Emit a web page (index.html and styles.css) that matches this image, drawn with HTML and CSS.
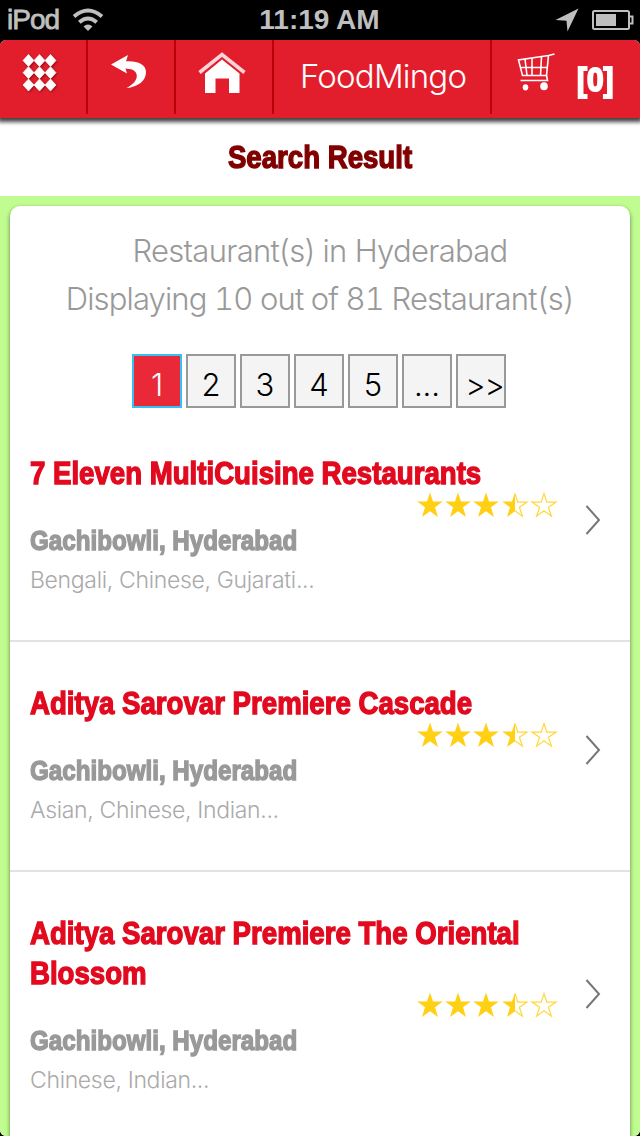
FILE: index.html
```html
<!DOCTYPE html>
<html lang="en">
<head>
    <meta charset="UTF-8">
    <meta name="viewport" content="width=device-width, initial-scale=1.0">
    <title>FoodMingo</title>
    <link rel="stylesheet" href="styles.css">
</head>
<body>
    <!-- shapes shared by all rating rows -->
    <svg class="defs" width="0" height="0">
        <symbol id="star" viewBox="0 0 28 26">
            <path d="M14 .5L17 9.5H26.8L19 15.3L22 25L14 19.2L6 25L9 15.3L1.2 9.5H11Z"/>
        </symbol>
        <symbol id="halfStar" viewBox="0 0 28 26">
            <path d="M14 .5V19.2L6 25L9 15.3L1.2 9.5H11Z"/>
            <path class="outline" d="M14 1.5L16.8 10.1H26L18.4 15.3L21.4 24.2L14 18.7"/>
        </symbol>
        <symbol id="emptyStar" viewBox="0 0 28 26">
            <path class="outline" d="M14 1.5L16.8 10.1H26L18.4 15.3L21.4 24.2L14 18.7L6.6 24.2L9.6 15.3L2 10.1H11.2Z"/>
        </symbol>
        <symbol id="rating" viewBox="0 0 142 26">
            <use href="#star" x="0" width="28" height="26"/>
            <use href="#star" x="28" width="28" height="26"/>
            <use href="#star" x="56" width="28" height="26"/>
            <use href="#halfStar" x="85" width="28" height="26"/>
            <use href="#emptyStar" x="114" width="28" height="26"/>
        </symbol>
    </svg>

    <div class="status-bar">
        <div class="carrier">
            <span>iPod</span>
            <svg width="32" height="24" viewBox="0 0 32 24">
                <g fill="none" stroke="#bfbfbf" stroke-width="4">
                    <path d="M2 8.5Q16 -3.5 30 8.5"/>
                    <path d="M7.3 14.2Q16 6.8 24.7 14.2"/>
                </g>
                <path fill="#bfbfbf" d="M11.5 18.5Q16 14.5 20.5 18.5L16 23Z"/>
            </svg>
        </div>
        <div class="time">11:19 AM</div>
        <div class="indicators">
            <svg width="24" height="24" viewBox="0 0 24 24">
                <path fill="#bfbfbf" d="M23.5 0.5L0.5 12L11.5 12.7L12.5 23.5Z"/>
            </svg>
            <svg width="42" height="20" viewBox="0 0 42 20">
                <rect x="1" y="1" width="36" height="18" rx="1.5" fill="none" stroke="#bfbfbf" stroke-width="2"/>
                <rect x="4" y="4" width="20" height="12" fill="#bfbfbf"/>
                <path d="M37 6.5H40.5V13.5H37" fill="none" stroke="#bfbfbf" stroke-width="2"/>
            </svg>
        </div>
    </div>

    <div class="page">
        <div class="header">
            <div class="nav menu">
                <svg class="shadow" width="36" height="38" viewBox="0 0 36 38">
                    <g fill="#fff" stroke="#fff" stroke-width="0.7">
                        <path d="M6.5 .5L12 6.5L6.5 12.5L1 6.5ZM17.5 .5L23 6.5L17.5 12.5L12 6.5ZM28.5 .5L34 6.5L28.5 12.5L23 6.5Z"/>
                        <path d="M6.5 12.7L12 18.7L6.5 24.7L1 18.7ZM17.5 12.7L23 18.7L17.5 24.7L12 18.7ZM28.5 12.7L34 18.7L28.5 24.7L23 18.7Z"/>
                        <path d="M6.5 25L12 31L6.5 37L1 31ZM17.5 25L23 31L17.5 37L12 31ZM28.5 25L34 31L28.5 37L23 31Z"/>
                    </g>
                </svg>
            </div>
            <div class="nav back">
                <svg width="36" height="34" viewBox="0 0 36 34">
                    <path fill="#fff" d="M0 9.5L17 0L15 6.3C26 5.5 35 9 35 17C35 26 27 32 15.5 33C23 29 27 24 25.5 19C24.2 15 20 13.7 14.5 13.5L16 18.5Z"/>
                </svg>
            </div>
            <div class="nav home">
                <svg width="48" height="42" viewBox="0 0 48 42">
                    <path fill="none" stroke="#fbd5d7" stroke-width="3.6" d="M1.5 20.5L24 2.5L46.5 20.5"/>
                    <path fill="#fff" d="M24 7.5L41.5 21.5V41H31V26.5H17.5V41H7V21.5Z"/>
                </svg>
            </div>
            <div class="nav brand">FoodMingo</div>
            <div class="nav cart">
                <svg width="38" height="38" viewBox="0 0 38 38">
                    <g fill="none" stroke="#fff" stroke-width="1.6">
                        <path d="M37.5 1L31.5 2.5L1.5 7L5.5 22.5H29.5L31.5 2.5"/>
                        <path d="M3 14.5H30.3M8 6L10 22.5M15 5V22.5M24.5 3.6L23.5 22.5M3.5 27.5H30.5L29.5 22.5"/>
                    </g>
                    <ellipse cx="8.5" cy="34.3" rx="2.8" ry="3.1" fill="#fff"/>
                    <ellipse cx="27" cy="33.3" rx="3.8" ry="4" fill="#fff"/>
                </svg>
                <span class="count">[0]</span>
            </div>
        </div>

        <h1 class="title">Search Result</h1>

        <div class="content">
            <div class="card">
                <div class="summary">
                    <div class="place">Restaurant(s) in Hyderabad</div>
                    <div class="total">Displaying 10 out of 81 Restaurant(s)</div>
                </div>
                <div class="pages">
                    <a class="active">1</a>
                    <a>2</a>
                    <a>3</a>
                    <a>4</a>
                    <a>5</a>
                    <a>...</a>
                    <a class="next">&gt;&gt;</a>
                </div>

                <div class="restaurant">
                    <div class="info">
                        <h2>7 Eleven MultiCuisine Restaurants</h2>
                        <svg class="stars" width="142" height="26"><use href="#rating"/></svg>
                        <h3>Gachibowli, Hyderabad</h3>
                        <p>Bengali, Chinese, Gujarati...</p>
                    </div>
                    <svg class="arrow" width="16" height="30" viewBox="0 0 16 30">
                        <path d="M1.5 1L14 15L1.5 29"/>
                    </svg>
                </div>
                <div class="restaurant">
                    <div class="info">
                        <h2>Aditya Sarovar Premiere Cascade</h2>
                        <svg class="stars" width="142" height="26"><use href="#rating"/></svg>
                        <h3>Gachibowli, Hyderabad</h3>
                        <p>Asian, Chinese, Indian...</p>
                    </div>
                    <svg class="arrow" width="16" height="30" viewBox="0 0 16 30">
                        <path d="M1.5 1L14 15L1.5 29"/>
                    </svg>
                </div>
                <div class="restaurant tall">
                    <div class="info">
                        <h2>Aditya Sarovar Premiere The Oriental<br>Blossom</h2>
                        <svg class="stars" width="142" height="26"><use href="#rating"/></svg>
                        <h3>Gachibowli, Hyderabad</h3>
                        <p>Chinese, Indian...</p>
                    </div>
                    <svg class="arrow" width="16" height="30" viewBox="0 0 16 30">
                        <path d="M1.5 1L14 15L1.5 29"/>
                    </svg>
                </div>
            </div>
        </div>
    </div>
</body>
</html>
```
FILE: styles.css
```css
* {
    box-sizing: border-box;
}

body {
    margin: 0;
    width: 640px;
    height: 1136px;
    overflow: hidden;
    background: #000;
    font-family: Inter, "Liberation Sans", sans-serif;
    font-weight: 300;
}

h1, h2, h3, p {
    margin: 0;
}

svg {
    display: block;
    flex: none;
}

.defs {
    position: absolute;
}

.status-bar {
    height: 40px;
    display: grid;
    grid-template-columns: 1fr auto 1fr;
    align-items: center;
    padding: 0 6px;
    color: #bfbfbf;
    font-family: "Liberation Sans", sans-serif;
    font-size: 28px;
}

.carrier {
    display: flex;
    align-items: center;
    gap: 13px;
    padding-left: 1px;
    font-weight: 400;
    letter-spacing: -1px;
    -webkit-text-stroke: 0.8px #bfbfbf;
}

.time {
    margin-left: -1px;
    font-weight: 700;
}

.indicators {
    display: flex;
    justify-content: flex-end;
    align-items: center;
    gap: 13px;
}

.page {
    height: 1096px;
    border-radius: 6px;
    overflow: hidden;
    background: #fff;
}

.header {
    display: flex;
    align-items: flex-start;
    height: 78px;
    background: #e31e2c;
    color: #fff;
    box-shadow: 0 2px 4px 2px #444;
}

.nav {
    height: 74px;
    border-right: 2px solid #bb0006;
}

.menu {
    width: 88px;
    padding: 14px 0 0 22px;
}

.shadow {
    filter: drop-shadow(1px 1px 1px #8c1018);
}

.back {
    width: 88px;
    padding: 15px 0 0 23px;
}

.home {
    width: 98px;
    padding: 12px 0 0 22px;
}

.brand {
    width: 218px;
    line-height: 73px;
    padding-left: 26px;
    font-size: 33px;
    letter-spacing: -0.8px;
    white-space: nowrap;
}

.cart {
    flex: 1;
    display: flex;
    border-right: none;
    padding: 13px 0 0 25px;
}

.count {
    margin-left: 22px;
    line-height: 54px;
    font-family: "Liberation Sans", sans-serif;
    font-size: 33px;
    font-weight: 700;
    transform: scaleX(0.9);
    transform-origin: left;
    -webkit-text-stroke: 2px #fff;
}

.title {
    height: 78px;
    line-height: 79px;
    text-align: center;
    color: #800000;
}

/* condensed black headings */
.title, h2, h3 {
    font-family: "Liberation Sans", sans-serif;
    font-size: 32px;
    font-weight: 700;
    transform: scaleX(0.863);
    -webkit-text-stroke: 1.4px;
    white-space: nowrap;
}

h2, h3 {
    transform-origin: left;
}

.content {
    height: 940px;
    padding: 10px 10px 0;
    background: #c0fc90;
}

.card {
    height: 960px;
    border-radius: 10px;
    background: #fff;
    box-shadow: 0 2px 4px rgba(0, 0, 0, 0.5);
}

.summary {
    padding-top: 21px;
    text-align: center;
    color: #999;
    font-size: 31px;
    line-height: 48px;
    letter-spacing: -0.7px;
    white-space: nowrap;
}

.total {
    font-variant-numeric: tabular-nums;
    letter-spacing: -0.85px;
}

.pages {
    display: flex;
    gap: 4px;
    margin: 31px 0 0 122px;
}

.pages a {
    width: 50px;
    height: 54px;
    border: 2px solid #999;
    background: #f4f4f4;
    color: #000;
    text-align: center;
    font-size: 31px;
    line-height: 57px;
}

.pages .active {
    border-color: #38c0f4;
    background: #e92938;
    color: #fff;
}

.pages .next {
    padding-left: 7px;
    letter-spacing: -1px;
}

.restaurant {
    display: flex;
    height: 230px;
    padding: 41px 30px 0 20px;
    border-bottom: 2px solid #e2e2e2;
}

.pages + .restaurant {
    margin-top: 4px;
}

.tall {
    height: 270px;
    border-bottom: none;
}

.info {
    width: 528px;
}

h2 {
    color: #e20a1f;
    line-height: 40px;
}

.stars {
    margin: -1px 0 0 386px;
    fill: #ffd014;
}

.outline {
    fill: none;
    stroke: #ffd83c;
    stroke-width: 1.2;
}

h3 {
    margin-top: 3px;
    color: #999;
    font-size: 28px;
    line-height: 39px;
}

p {
    color: #aaa;
    font-size: 23px;
    line-height: 40px;
    letter-spacing: -0.33px;
}

.arrow {
    margin: 52px 0 0 27px;
    fill: none;
    stroke: #777;
    stroke-width: 2;
}

.tall .arrow {
    margin-top: 66px;
}
```
